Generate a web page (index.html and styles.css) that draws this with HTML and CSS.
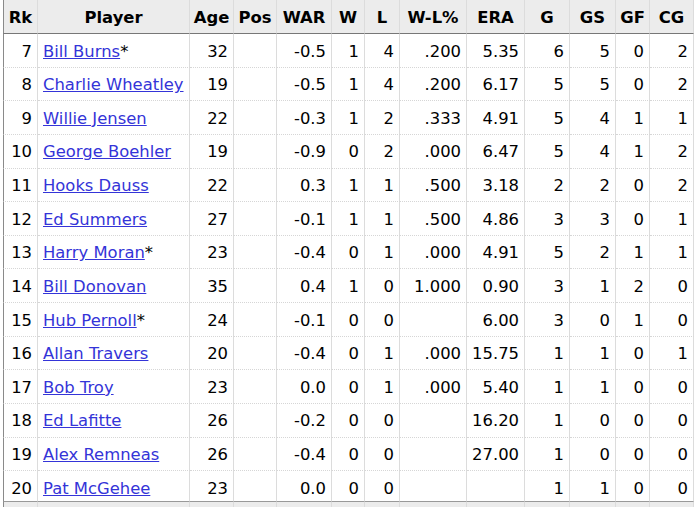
FILE: index.html
```html
<!DOCTYPE html>
<html lang="en">
<head>
<meta charset="utf-8">
<title>Pitching</title>
<link rel="stylesheet" href="styles.css">
</head>
<body>
<table class="stats">
  <thead>
    <tr>
      <th class="c-rk">Rk</th>
      <th class="c-player">Player</th>
      <th class="c-age">Age</th>
      <th class="c-pos">Pos</th>
      <th class="c-war">WAR</th>
      <th class="c-w">W</th>
      <th class="c-l">L</th>
      <th class="c-wlp">W-L%</th>
      <th class="c-era">ERA</th>
      <th class="c-g">G</th>
      <th class="c-gs">GS</th>
      <th class="c-gf">GF</th>
      <th class="c-cg">CG</th>
    </tr>
  </thead>
  <tbody>
    <tr><td>7</td><td class="name"><a href="#">Bill Burns</a>*</td><td>32</td><td></td><td>-0.5</td><td>1</td><td>4</td><td>.200</td><td>5.35</td><td>6</td><td>5</td><td>0</td><td>2</td></tr>
    <tr><td>8</td><td class="name"><a href="#">Charlie Wheatley</a></td><td>19</td><td></td><td>-0.5</td><td>1</td><td>4</td><td>.200</td><td>6.17</td><td>5</td><td>5</td><td>0</td><td>2</td></tr>
    <tr><td>9</td><td class="name"><a href="#">Willie Jensen</a></td><td>22</td><td></td><td>-0.3</td><td>1</td><td>2</td><td>.333</td><td>4.91</td><td>5</td><td>4</td><td>1</td><td>1</td></tr>
    <tr><td>10</td><td class="name"><a href="#">George Boehler</a></td><td>19</td><td></td><td>-0.9</td><td>0</td><td>2</td><td>.000</td><td>6.47</td><td>5</td><td>4</td><td>1</td><td>2</td></tr>
    <tr><td>11</td><td class="name"><a href="#">Hooks Dauss</a></td><td>22</td><td></td><td>0.3</td><td>1</td><td>1</td><td>.500</td><td>3.18</td><td>2</td><td>2</td><td>0</td><td>2</td></tr>
    <tr><td>12</td><td class="name"><a href="#">Ed Summers</a></td><td>27</td><td></td><td>-0.1</td><td>1</td><td>1</td><td>.500</td><td>4.86</td><td>3</td><td>3</td><td>0</td><td>1</td></tr>
    <tr><td>13</td><td class="name"><a href="#">Harry Moran</a>*</td><td>23</td><td></td><td>-0.4</td><td>0</td><td>1</td><td>.000</td><td>4.91</td><td>5</td><td>2</td><td>1</td><td>1</td></tr>
    <tr><td>14</td><td class="name"><a href="#">Bill Donovan</a></td><td>35</td><td></td><td>0.4</td><td>1</td><td>0</td><td>1.000</td><td>0.90</td><td>3</td><td>1</td><td>2</td><td>0</td></tr>
    <tr><td>15</td><td class="name"><a href="#">Hub Pernoll</a>*</td><td>24</td><td></td><td>-0.1</td><td>0</td><td>0</td><td></td><td>6.00</td><td>3</td><td>0</td><td>1</td><td>0</td></tr>
    <tr><td>16</td><td class="name"><a href="#">Allan Travers</a></td><td>20</td><td></td><td>-0.4</td><td>0</td><td>1</td><td>.000</td><td>15.75</td><td>1</td><td>1</td><td>0</td><td>1</td></tr>
    <tr><td>17</td><td class="name"><a href="#">Bob Troy</a></td><td>23</td><td></td><td>0.0</td><td>0</td><td>1</td><td>.000</td><td>5.40</td><td>1</td><td>1</td><td>0</td><td>0</td></tr>
    <tr><td>18</td><td class="name"><a href="#">Ed Lafitte</a></td><td>26</td><td></td><td>-0.2</td><td>0</td><td>0</td><td></td><td>16.20</td><td>1</td><td>0</td><td>0</td><td>0</td></tr>
    <tr><td>19</td><td class="name"><a href="#">Alex Remneas</a></td><td>26</td><td></td><td>-0.4</td><td>0</td><td>0</td><td></td><td>27.00</td><td>1</td><td>0</td><td>0</td><td>0</td></tr>
    <tr class="last"><td>20</td><td class="name"><a href="#">Pat McGehee</a></td><td>23</td><td></td><td>0.0</td><td>0</td><td>0</td><td></td><td></td><td>1</td><td>1</td><td>0</td><td>0</td></tr>
    <tr class="repeat"><td></td><td></td><td></td><td></td><td></td><td></td><td></td><td></td><td></td><td></td><td></td><td></td><td></td></tr>
  </tbody>
</table>
</body>
</html>
```

FILE: styles.css
```css
html, body {
  margin: 0;
  padding: 0;
  background: #fff;
}

body {
  padding-left: 3px;
  font-family: "DejaVu Sans", Verdana, sans-serif;
  font-size: 16.4px;
  color: #000;
}

.stats {
  table-layout: fixed;
  width: 691px;
  border-collapse: separate;
  border-spacing: 0;
}

.stats th,
.stats td {
  box-sizing: border-box;
  border-right: 1px solid #dcdcdc;
  line-height: 19px;
  white-space: nowrap;
  overflow: hidden;
}

.stats th:first-child,
.stats td:first-child {
  border-left: 1px solid #8a8a8a;
}

.stats th {
  background: #ececec;
  font-weight: bold;
  text-align: center;
  padding: 8px 2px 6px;
  height: 34px;
  border-bottom: 1px solid #777;
}

.stats td {
  text-align: right;
  padding: 7.5px 5px 6.14px;
  height: 33.64px;
  border-bottom: 1px dotted #d6d6d6;
}

.stats td.name {
  text-align: left;
  padding-left: 5px;
}

.stats a {
  color: #3434d8;
  text-decoration: underline;
}

.stats tr.last td {
  padding-bottom: 3px;
  height: 30.5px;
  border-bottom: 1px solid #999;
}

.stats tr.repeat td {
  background: #ececec;
  height: 20px;
  padding: 0;
  border-bottom: none;
}

.c-rk { width: 35px; }
.c-player { width: 152px; }
.c-age { width: 44px; }
.c-pos { width: 43px; }
.c-war { width: 55px; }
.c-w { width: 33px; }
.c-l { width: 35px; }
.c-wlp { width: 67px; }
.c-era { width: 58px; }
.c-g { width: 45px; }
.c-gs { width: 46px; }
.c-gf { width: 34px; }
.c-cg { width: 44px; }
```
